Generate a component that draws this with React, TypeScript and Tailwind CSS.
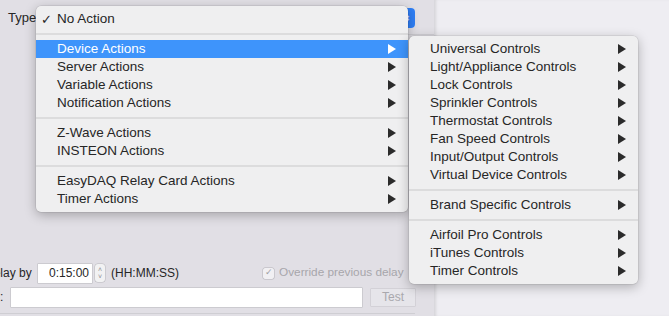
import React from 'react';

const font = { fontFamily: '"Liberation Sans", Arial, sans-serif' };

type Entry = { label: string; sub?: boolean; active?: boolean; checked?: boolean } | 'sep';

const mainItems: Entry[] = [
  { label: 'No Action', checked: true },
  'sep',
  { label: 'Device Actions', sub: true, active: true },
  { label: 'Server Actions', sub: true },
  { label: 'Variable Actions', sub: true },
  { label: 'Notification Actions', sub: true },
  'sep',
  { label: 'Z-Wave Actions', sub: true },
  { label: 'INSTEON Actions', sub: true },
  'sep',
  { label: 'EasyDAQ Relay Card Actions', sub: true },
  { label: 'Timer Actions', sub: true },
];

const subItems: Entry[] = [
  { label: 'Universal Controls', sub: true },
  { label: 'Light/Appliance Controls', sub: true },
  { label: 'Lock Controls', sub: true },
  { label: 'Sprinkler Controls', sub: true },
  { label: 'Thermostat Controls', sub: true },
  { label: 'Fan Speed Controls', sub: true },
  { label: 'Input/Output Controls', sub: true },
  { label: 'Virtual Device Controls', sub: true },
  'sep',
  { label: 'Brand Specific Controls', sub: true },
  'sep',
  { label: 'Airfoil Pro Controls', sub: true },
  { label: 'iTunes Controls', sub: true },
  { label: 'Timer Controls', sub: true },
];

const Arrow = ({ white }: { white?: boolean }) => (
  <svg width="8" height="10" viewBox="0 0 8 10" className="shrink-0">
    <path d="M0 0 L8 5 L0 10 Z" fill={white ? '#ffffff' : '#2b2b2b'} />
  </svg>
);

const Menu = ({ items, className }: { items: Entry[]; className: string }) => (
  <div
    className={`absolute rounded-[5px] bg-[#efeff0] py-[4px] shadow-[0_3px_12px_rgba(0,0,0,0.28),0_0_0_0.5px_rgba(0,0,0,0.12)] ${className}`}
  >
    {items.map((it, i) =>
      it === 'sep' ? (
        <div key={i} className="flex h-[12px] items-center">
          <div className="h-[2px] w-full bg-[#dcdcdd]" />
        </div>
      ) : (
        <div
          key={i}
          className={`flex h-[18px] items-center pl-[5px] pr-[12px] text-[13.5px] leading-none ${
            it.active ? 'bg-[#3e94fb] text-white' : 'text-[#262626]'
          }`}
        >
          <span className="w-[16px] text-[13px]">{it.checked ? '✓' : ''}</span>
          <span className="flex-1">{it.label}</span>
          {it.sub && <Arrow white={it.active} />}
        </div>
      )
    )}
  </div>
);

export default function App() {
  return (
    <div className="relative flex h-[316px] w-[669px] overflow-hidden bg-[#e1dfe5]" style={font}>
      {/* dialog pane */}
      <div className="flex w-[434px] flex-col text-[12px] text-[#262626]">
        <div className="flex h-[34px] items-center pl-[8px] pt-[2px] text-[13px]">
          <span className="w-[32px]">Type:</span>
          <div className="flex h-[20px] w-[375px] items-center justify-end rounded-[4px] bg-white">
            <div className="flex h-[20px] w-[16px] items-center justify-center rounded-r-[4px] bg-[#2f7ff6] text-[8px] leading-[7px] text-white">
              ⇕
            </div>
          </div>
        </div>
        <div className="ml-[380px] h-[1px] bg-[#d0cfd4]" />
        <div className="flex-1" />
        <div className="flex h-[24px] items-center">
          <span className="-ml-[15px] w-[53px]">Delay by</span>
          <div className="flex h-[19px] w-[54px] items-center justify-end bg-white pr-[3px] shadow-[0_0_0_0.5px_#b8b7bc]">
            0:15:00
          </div>
          <div className="ml-[3px] flex h-[18px] w-[10px] flex-col items-center justify-center rounded-[3px] bg-[#f2f2f3] text-[7px] leading-[7px] text-[#8e8e92] shadow-[0_0_0_0.5px_#b8b7bc]">
            <span>˄</span>
            <span>˅</span>
          </div>
          <span className="ml-[6px] w-[152px]">(HH:MM:SS)</span>
          <div className="flex h-[11px] w-[11px] items-center justify-center rounded-[2px] bg-[#f1f0f3] text-[9px] text-[#a09fa4] shadow-[0_0_0_0.5px_#b3b2b7]">
            ✓
          </div>
          <span className="ml-[5px] text-[11.8px] text-[#a7a6ab]">Override previous delay</span>
        </div>
        <div className="flex h-[24px] items-center">
          <span className="w-[11px]">:</span>
          <div className="h-[19px] w-[351px] bg-white shadow-[0_0_0_0.5px_#b8b7bc]" />
          <div className="ml-[9px] flex h-[17px] w-[44px] items-center justify-center bg-[#e6e5ea] text-[#a9a8ad] shadow-[0_0_0_0.5px_#c5c4c9]">
            Test
          </div>
        </div>
        <div className="mt-[4px] mb-[2px] h-[1px] w-[415px] bg-[#cfced3]" />
      </div>
      {/* next pane */}
      <div className="flex-1 bg-[#eeedf2] shadow-[inset_3px_0_3px_-1px_rgba(0,0,0,0.1)]" />

      <Menu items={mainItems} className="left-[36px] top-[6px] w-[372px]" />
      <Menu items={subItems} className="left-[409px] top-[36px] w-[229px]" />
    </div>
  );
}
